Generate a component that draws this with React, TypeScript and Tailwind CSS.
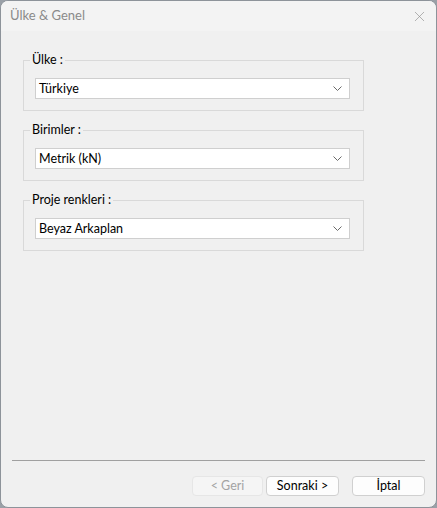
import { X } from "lucide-react";

interface GroupProps {
  label: string;
  value: string;
  className?: string;
}

function Chevron() {
  return (
    <svg width="9" height="5" viewBox="0 0 9 5" className="text-[#6a6a6a]">
      <path d="M0.5 0.5 L4.5 4.5 L8.5 0.5" fill="none" stroke="currentColor" strokeWidth="1" />
    </svg>
  );
}

function SelectGroup({ label, value, className }: GroupProps) {
  return (
    <fieldset
      className={`w-[341px] border border-[#d9d9d9] pl-[6px] pr-[13px] pt-[10px] pb-[11px] ${className ?? ""}`}
    >
      <legend className="px-[2px] text-[12.5px] leading-[16px] text-black">{label}</legend>
      <div className="ml-[5px] flex h-[21px] items-center justify-between border border-[#cfcfcf] bg-white pl-[3px] pr-[7px] text-[12.5px] leading-[16px] text-black">
        <span>{value}</span>
        <Chevron />
      </div>
    </fieldset>
  );
}

function DialogButton({ children, disabled }: { children: string; disabled?: boolean }) {
  return (
    <button
      disabled={disabled}
      className={
        disabled
          ? "h-[20px] w-[71px] rounded-[4px] border border-[#e6e6e6] bg-[#f5f5f5] text-[12.5px] leading-[16px] text-[#a3a3a3]"
          : "h-[20px] w-[73px] rounded-[4px] border border-[#d0d0d0] bg-[#fdfdfd] text-[12.5px] leading-[16px] text-black"
      }
    >
      {children}
    </button>
  );
}

export default function App() {
  return (
    <div className="h-[508px] w-[437px] bg-[#9aa0a7] font-['Lato',sans-serif]">
      <div className="flex h-full flex-col overflow-hidden rounded-[8px] border border-[#8d939a] bg-[#f0f0f0]">
        <div className="flex h-[30px] shrink-0 items-center justify-between bg-[#f3f3f3] pl-[9px] pr-[8px]">
          <span className="text-[13px] text-[#8a8a8a]">Ülke &amp; Genel</span>
          <X size={17} strokeWidth={0.9} className="text-[#8a8a8a]" />
        </div>

        <div className="flex flex-1 flex-col pt-[21px]">
          <div className="flex flex-col pl-[22px]">
            <SelectGroup label="Ülke :" value="Türkiye" />
            <SelectGroup label="Birimler :" value="Metrik (kN)" className="mt-[11px]" />
            <SelectGroup label="Proje renkleri :" value="Beyaz Arkaplan" className="mt-[11px]" />
          </div>

          <div className="flex-1" />

          <div className="mx-[11px] h-px shrink-0 bg-[#a0a0a0]" />

          <div className="flex h-[46px] shrink-0 items-start justify-end pr-[11px] pt-[15px]">
            <DialogButton disabled>&lt; Geri</DialogButton>
            <div className="ml-[3px] flex">
              <DialogButton>Sonraki &gt;</DialogButton>
            </div>
            <div className="ml-[13px] flex">
              <DialogButton>İptal</DialogButton>
            </div>
          </div>
        </div>
      </div>
    </div>
  );
}
